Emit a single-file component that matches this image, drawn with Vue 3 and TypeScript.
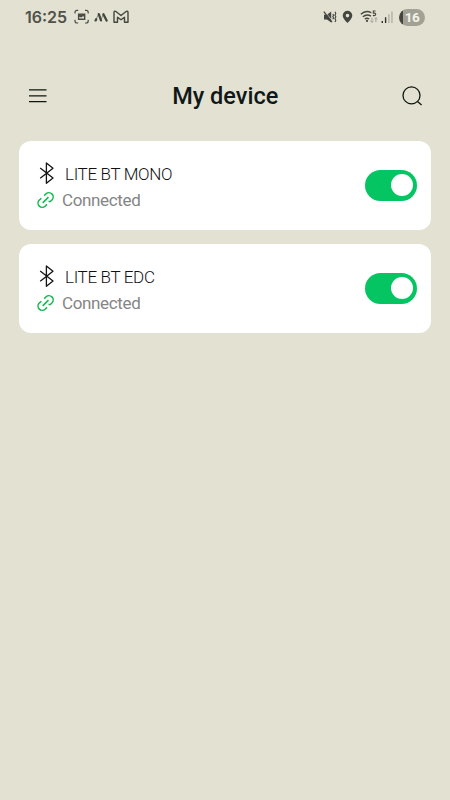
<script setup lang="ts">
import { ref } from 'vue'

interface Device {
  name: string
  status: string
  on: boolean
}

const devices = ref<Device[]>([
  { name: 'LITE BT MONO', status: 'Connected', on: true },
  { name: 'LITE BT EDC', status: 'Connected', on: true },
])
</script>

<template>
  <main class="screen">
    <div class="status-bar">
      <div class="status-left">
        <span class="clock">16:25</span>
        <svg class="capture" width="16" height="16" viewBox="0 0 16 16">
          <path d="M1 4.6V3.4Q1 1.4 3 1.4H4.2M11 1.4H12.2Q14.2 1.4 14.2 3.4V4.6M14.2 10.8V12Q14.2 14 12.2 14H11M4.2 14H3Q1 14 1 12V10.8" fill="none" stroke="#4b4c45" stroke-width="1.2" />
          <path d="M4.6 5.2H10.7V10.2H4.6Z" fill="none" stroke="#4b4c45" stroke-width="1.4" />
          <path d="M4.6 5.2H10.7V8L9 7.2 7.2 8.6 4.6 7.6Z" fill="#4b4c45" />
        </svg>
        <svg class="slashes" width="15" height="12" viewBox="0 0 15 12">
          <path d="M1.6 9.4L2.2 8.2M4.8 3.2L7 9.3M9.4 3.2L12.6 9.6" fill="none" stroke="#45463f" stroke-width="2.3" stroke-linecap="round" />
          <path d="M2 8.4L4.4 3.4M7.3 8.4L9.2 3.4" fill="none" stroke="#45463f" stroke-width=".6" />
        </svg>
        <svg class="mail" width="16" height="14" viewBox="0 0 16 14">
          <path d="M1 12.3V2.5Q1 .8 2.6 1.3L8 5.5 13.4 1.3Q15 .8 15 2.5V12.3H11.5V7.2L8 9.8 4.5 7.2V12.3Z" fill="none" stroke="#45463f" stroke-width="1.4" stroke-linejoin="round" />
        </svg>
      </div>
      <div class="status-right">
        <svg class="mute" width="14" height="14" viewBox="0 0 14 14">
          <path d="M1 4.8H4L8.2 1.4V12.5L4 9.4H1Z" fill="#45463f" />
          <path d="M1.4 1L9.6 11.2" stroke="#e2e1d2" stroke-width=".8" />
          <path d="M.8 1.6L9 12.2" stroke="#45463f" stroke-width="1.3" />
          <path d="M9.8 4L10.6 5.3 9.8 6.6 10.6 7.9 9.8 9.2M12 1.7L12.8 3.4 12 5.1 12.8 6.8 12 8.5 12.8 10.2 12 12" fill="none" stroke="#45463f" stroke-width="1.1" />
        </svg>
        <svg class="pin" width="11" height="14" viewBox="0 0 11 14">
          <path fill-rule="evenodd" d="M5.5 .8A4.8 4.8 0 0 0 .7 5.6C.7 8.8 5.5 13.1 5.5 13.1S10.3 8.8 10.3 5.6A4.8 4.8 0 0 0 5.5 .8ZM5.5 3.8A1.8 1.8 0 1 1 5.5 7.4A1.8 1.8 0 0 1 5.5 3.8Z" fill="#45463f" />
        </svg>
        <svg class="wifi" width="19" height="16" viewBox="0 0 19 16">
          <path d="M.8 5.2Q5.8 .7 11.3 3.7M2.8 7.8Q6.7 4.6 11 7.1M4.8 10.1Q7 8.4 9.2 10.1" fill="none" stroke="#45463f" stroke-width="1.3" />
          <circle cx="7" cy="11.9" r="1.1" fill="#45463f" />
          <path d="M15.6 2H13.3V4.2Q15.8 3.8 15.7 5.5 15.3 7 12.9 6.4" fill="none" stroke="#45463f" stroke-width="1.1" />
          <path d="M11.9 8.6V13.4M10.3 11.8L11.9 13.4 13.5 11.8M15.9 13.2V8.6M14.3 10.2L15.9 8.6 17.5 10.2" fill="none" stroke="#a3a497" stroke-width="1" />
        </svg>
        <svg class="signal" width="13" height="14" viewBox="0 0 13 14">
          <path d="M.6 11H2V13H.6ZM3.9 7.3H5.3V13H3.9Z" fill="#30312c" />
          <path d="M7.1 4.3H8.6V13H7.1ZM10.2 1.4H11.7V13H10.2Z" fill="#b5b5a7" />
        </svg>
        <span class="battery">16</span>
      </div>
    </div>

    <header class="header">
      <button class="icon-button" aria-label="Menu">
        <svg width="20" height="16" viewBox="0 0 20 16">
          <path d="M1 1.8H18.5M1 7.8H18.5M1 13.6H18.5" stroke="#11170f" stroke-width="1.2" />
        </svg>
      </button>
      <h1 class="title">My device</h1>
      <button class="icon-button" aria-label="Search">
        <svg width="22" height="22" viewBox="0 0 22 22">
          <circle cx="10.5" cy="10.4" r="8.5" fill="none" stroke="#10150f" stroke-width="1.3" />
          <path d="M16.5 16.4L20.6 20" stroke="#10150f" stroke-width="1.3" />
        </svg>
      </button>
    </header>

    <section class="devices">
      <article v-for="device in devices" :key="device.name" class="card">
        <div class="info">
          <div class="name-row">
            <svg width="16" height="24" viewBox="0 0 16 24">
              <path d="M1.2 6L14 16 7.4 21.3V.9L14 6.2 1.2 16.2" fill="none" stroke="#151515" stroke-width="1.3" stroke-linejoin="round" />
            </svg>
            <span class="name">{{ device.name }}</span>
          </div>
          <div class="state-row">
            <svg width="18" height="18" viewBox="0 0 18 18">
              <g fill="none" stroke="#12b94e" stroke-width="1.5">
                <path d="M7.2 4.6L9.1 2.7A4.25 4.25 0 0 1 15.1 8.7L13.3 10.5H11.5" />
                <path d="M10 13.4L8.1 15.3A4.25 4.25 0 0 1 2.1 9.3L4.4 7.2" />
                <path d="M5.7 11.9L11.5 6.1" />
              </g>
            </svg>
            <span class="state">{{ device.status }}</span>
          </div>
        </div>
        <button class="toggle" :class="{ on: device.on }" role="switch" :aria-checked="device.on" :aria-label="device.name" @click="device.on = !device.on">
          <span class="knob"></span>
        </button>
      </article>
    </section>
  </main>
</template>

<style>
body {
  margin: 0;
  background: #e2e1d2;
}
</style>

<style scoped>
.screen {
  box-sizing: border-box;
  width: 450px;
  height: 800px;
  overflow: hidden;
  background: #e2e1d2;
  font-family: Roboto, sans-serif;
}

.status-bar {
  box-sizing: border-box;
  display: flex;
  justify-content: space-between;
  height: 34px;
  padding: 0 25px;
}

.status-left,
.status-right {
  display: flex;
  align-items: center;
}

.clock {
  width: 43px;
  margin-right: 5.5px;
  color: #50514a;
  font: 600 16px/34px Inter, sans-serif;
  white-space: nowrap;
}

.slashes {
  margin-left: 4px;
}

.mail {
  margin-left: 4px;
}

.pin {
  margin-left: 5px;
}

.wifi {
  margin-left: 7px;
}

.signal {
  margin-left: 2px;
}

.battery {
  width: 26px;
  height: 17px;
  margin-left: 5px;
  border-radius: 9px;
  background: linear-gradient(90deg, #45463f 4px, #a1a295 4px);
  color: #f3f3e9;
  font: 700 13.5px/17px Roboto, sans-serif;
  letter-spacing: -0.4px;
  text-align: center;
}

.header {
  box-sizing: border-box;
  display: flex;
  align-items: center;
  justify-content: space-between;
  height: 44px;
  margin-top: 40px;
  padding: 0 27px 0 28px;
}

.icon-button {
  display: flex;
  padding: 0;
  border: 0;
  background: none;
}

.title {
  margin: 0;
  padding-left: 1.5px;
  color: #101817;
  font-size: 23.5px;
  font-weight: 500;
  line-height: 30px;
}

.devices {
  display: flex;
  flex-direction: column;
  gap: 14px;
  padding: 22.5px 19px 0;
}

.card {
  box-sizing: border-box;
  display: flex;
  align-items: center;
  justify-content: space-between;
  height: 89.3px;
  padding: 0 14px 0 18px;
  border-radius: 12px;
  background: #fff;
}

.info {
  padding-top: 3px;
}

.name-row,
.state-row {
  display: flex;
  align-items: center;
}

.name-row {
  height: 26px;
  padding-left: 2px;
  gap: 10px;
}

.state-row {
  height: 26px;
  gap: 7px;
}

.name {
  color: #111;
  font-size: 17px;
  font-weight: 300;
  letter-spacing: -0.33px;
}

.state {
  color: #858585;
  font-size: 17px;
  letter-spacing: -0.36px;
}

.toggle {
  box-sizing: border-box;
  display: flex;
  align-items: center;
  width: 52px;
  height: 31px;
  padding: 0 4px;
  border: 0;
  border-radius: 16px;
  background: #c7c7c7;
}

.toggle.on {
  justify-content: flex-end;
  background: #05c563;
}

.knob {
  width: 22px;
  height: 22px;
  border-radius: 50%;
  background: #fff;
}
</style>
